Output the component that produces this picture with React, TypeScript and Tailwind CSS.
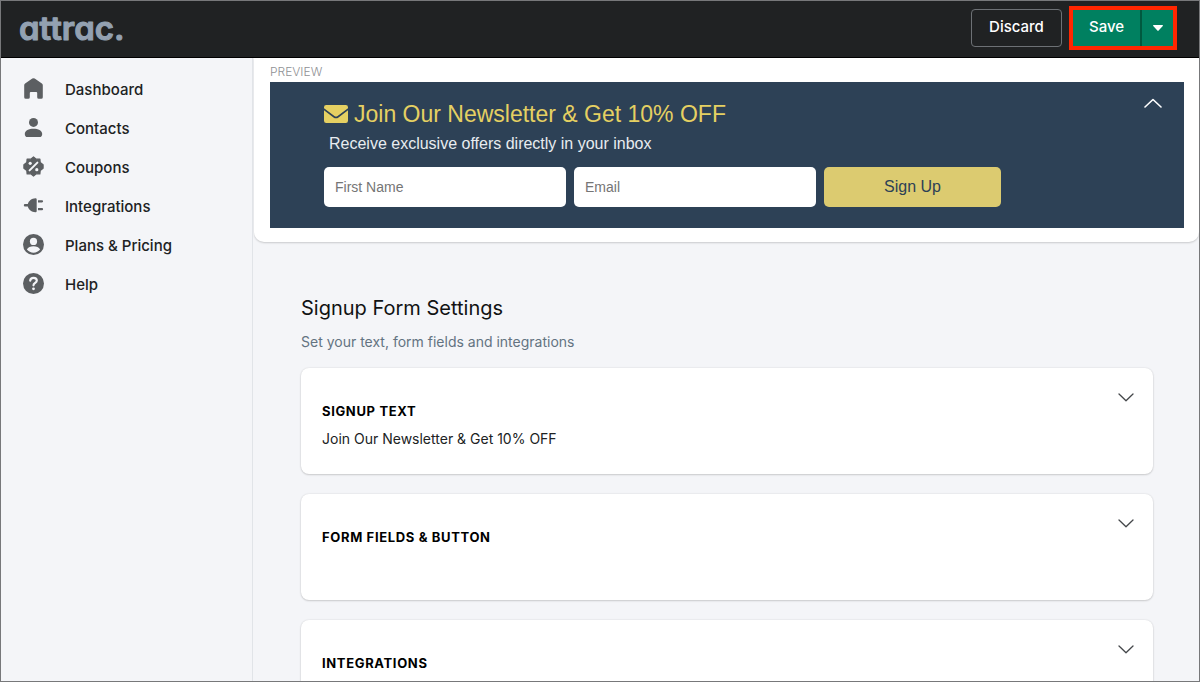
import React, { useState } from 'react';

const HomeIcon = () => (
  <svg viewBox="0 0 21 21" className="size-[21px]" fill="currentColor" aria-hidden="true">
    <path d="M9.3 .6a2 2 0 0 1 2.4 0l7.2 5a2.2 2.2 0 0 1 .9 1.8V19.2a1.6 1.6 0 0 1-1.6 1.6h-2.4a1.6 1.6 0 0 1-1.6-1.6v-4.200a1 1 0 0 0-1-1H7.800a1 1 0 0 0-1 1v4.200a1.6 1.6 0 0 1-1.6 1.6H2.800a1.6 1.6 0 0 1-1.6-1.6V7.400a2.2 2.2 0 0 1 .9-1.8z" />
  </svg>
);

const ContactsIcon = () => (
  <svg viewBox="0 0 21 21" className="size-[21px]" fill="currentColor" aria-hidden="true">
    <circle cx="10.5" cy="5.4" r="4.5" />
    <path d="M10.5 11.8c4.6 0 8.7 1.9 8.7 5.1 0 1.9-1 3.1-2.7 3.1h-12c-1.7 0-2.7-1.2-2.7-3.1 0-3.2 4.1-5.1 8.7-5.1z" />
  </svg>
);

const CouponsIcon = () => (
  <svg viewBox="0 0 21 21" className="size-[21px]" fill="currentColor" aria-hidden="true">
    <path
      d="M10.5 .9l2.7 2.3 3.7-.2.3 3.5 2.900 2.200v3.600l-2.900 2.200-.3 3.500-3.700-.2-2.700 2.300-2.700-2.300-3.700.2-.3-3.500L.9 12.300V8.700l2.900-2.200.3-3.500 3.700.2z"
      stroke="currentColor"
      strokeWidth="1.2"
      strokeLinejoin="round"
    />
    <path d="M6.600 14.400l7.800-7.800" stroke="#f4f5f8" strokeWidth="2" strokeLinecap="round" />
    <circle cx="7.2" cy="7.3" r="1.6" fill="#f4f5f8" />
    <circle cx="13.8" cy="13.7" r="1.6" fill="#f4f5f8" />
  </svg>
);

const PlugIcon = () => (
  <svg viewBox="0 0 21 21" className="size-[21px]" fill="currentColor" aria-hidden="true">
    <path d="M12.400 3.200a1.200 1.200 0 0 1 1.300 1.200v11.600a1.200 1.200 0 0 1-1.300 1.200c-3.800-.1-6.700-2.500-7.600-5.700H2a1.100 1.100 0 0 1 0-2.400h2.800c.9-3.300 3.800-5.700 7.600-5.900z" />
    <path d="M15 5.200h4a1 1 0 0 1 0 2.200h-4zM15 13.100h4a1 1 0 0 1 0 2.200h-4z" />
  </svg>
);

const AccountIcon = () => (
  <svg viewBox="0 0 21 21" className="size-[21px]" fill="currentColor" aria-hidden="true">
    <circle cx="10.5" cy="10.5" r="10.5" />
    <circle cx="10.5" cy="7.4" r="3.6" fill="#f4f5f8" />
    <path d="M10.5 12.3c3 0 5.4 1.2 6.600 3.100a8.300 8.300 0 0 1-13.200 0c1.200-1.900 3.600-3.100 6.600-3.100z" fill="#f4f5f8" />
  </svg>
);

const HelpIcon = () => (
  <svg viewBox="0 0 21 21" className="size-[21px]" fill="currentColor" aria-hidden="true">
    <circle cx="10.5" cy="10.5" r="10.5" />
    <path
      d="M7.200 7.600c.2-1.800 1.500-2.800 3.300-2.800 2 0 3.300 1.100 3.300 2.800 0 2.300-3.300 2.300-3.300 4.700"
      fill="none"
      stroke="#f4f5f8"
      strokeWidth="2.2"
      strokeLinecap="round"
    />
    <circle cx="10.5" cy="15.8" r="1.4" fill="#f4f5f8" />
  </svg>
);

const navItems = [
  { label: 'Dashboard', icon: HomeIcon },
  { label: 'Contacts', icon: ContactsIcon },
  { label: 'Coupons', icon: CouponsIcon },
  { label: 'Integrations', icon: PlugIcon },
  { label: 'Plans & Pricing', icon: AccountIcon },
  { label: 'Help', icon: HelpIcon }
];

const sections = [
  { title: 'Signup Text', text: 'Join Our Newsletter & Get 10% OFF' },
  { title: 'Form Fields & Button', text: '' },
  { title: 'Integrations', text: '' }
];

const App = () => {
  const [form, setForm] = useState({ firstName: '', email: '' });

  return (
    <div className="h-screen flex flex-col overflow-hidden border border-[#77787a] bg-[#f4f5f8] font-['Inter',sans-serif] text-[#202223]">
      {/* Top bar */}
      <header className="flex items-center justify-between border-b border-black bg-[#202223] h-[57px] shrink-0 pl-[18px] pr-[22px] pb-[3px]">
        <a href="#" aria-label="attrac.">
          <svg viewBox="0 0 120 50" className="w-[120px] h-[50px]">
            <text
              x="0"
              y="37"
              fill="#93a1b1"
              stroke="#93a1b1"
              strokeWidth="1"
              strokeLinejoin="round"
              className="text-[33px] font-semibold [font-feature-settings:'cv11']"
            >
              attrac.
            </text>
          </svg>
        </a>
        <div className="flex items-center gap-[7px] text-[15px] font-medium text-white">
          <button className="h-[38px] w-[91px] rounded border border-[#6d7175]">Discard</button>
          <div className="flex h-11 border-4 border-[#ff2600]">
            <button className="w-[67px] bg-[#008060]">Save</button>
            <button aria-label="More save options" className="flex items-center justify-center w-[33px] bg-[#008060] border-l-2 border-[#00593f]">
              <svg viewBox="0 0 10 6" className="w-[10px] h-[6px]" fill="#fff" aria-hidden="true">
                <path d="M.6 0h8.8c.5 0 .7.5.4.9L5.6 5.6a.8.8 0 0 1-1.2 0L.2.9C-.1.5.1 0 .6 0z" />
              </svg>
            </button>
          </div>
        </div>
      </header>

      <div className="flex flex-1 min-h-0">
        {/* Sidebar */}
        <nav className="w-[252px] shrink-0 border-r border-[#e1e4e8] pt-[13px]">
          <ul>
            {navItems.map(({ label, icon: Icon }) => (
              <li key={label}>
                <a href="#" className="flex items-center gap-[21px] h-[39px] pl-[22px] text-[15px] font-medium">
                  <span className="pb-[5px] text-[#5c5f62]">
                    <Icon />
                  </span>
                  {label}
                </a>
              </li>
            ))}
          </ul>
        </nav>

        <main className="flex-1 min-w-0 overflow-y-auto pl-px [scrollbar-width:none]">
          {/* Preview */}
          <section className="rounded-b-[10px] bg-white pl-4 pr-[15px] pt-[6px] pb-[14px] shadow-[0_1px_2px_rgba(0,0,0,0.18)]">
            <h2 className="pb-[2px] text-xs leading-4 font-light text-[#8f9194]">PREVIEW</h2>
            <div className="relative bg-[#2d4156] pl-[54px] pt-4 pb-[21px] font-['Liberation_Sans',sans-serif]">
              <h3 className="flex items-center gap-[6px] text-[23px] leading-8 text-[#e5d062]">
                <svg viewBox="0 0 24 18" className="w-6 h-[18px]" fill="currentColor" aria-hidden="true">
                  <path d="M2.200 0h19.600A2.200 2.200 0 0 1 24 2.200v1L13.600 11a2.600 2.600 0 0 1-3.200 0L0 3.200v-1A2.200 2.200 0 0 1 2.200 0z" />
                  <path d="M0 5.300l9.500 7.100a4.200 4.200 0 0 0 5 0L24 5.300v10.500a2.200 2.200 0 0 1-2.200 2.200H2.200A2.200 2.200 0 0 1 0 15.800z" />
                </svg>
                Join Our Newsletter &amp; Get 10% OFF
              </h3>
              <p className="pl-[5px] pt-[2px] text-base leading-6 text-[#e8ecf0]">
                Receive exclusive offers directly in your inbox
              </p>
              <form className="flex gap-2 pt-[11px]" onSubmit={(e) => e.preventDefault()}>
                <input
                  type="text"
                  aria-label="First Name"
                  placeholder="First Name"
                  value={form.firstName}
                  onChange={(e) => setForm(prev => ({ ...prev, firstName: e.target.value }))}
                  className="w-[242px] h-10 rounded-[5px] bg-white px-[11px] text-sm text-gray-800 placeholder:text-[#757575]"
                />
                <input
                  type="email"
                  aria-label="Email"
                  placeholder="Email"
                  value={form.email}
                  onChange={(e) => setForm(prev => ({ ...prev, email: e.target.value }))}
                  className="w-[242px] h-10 rounded-[5px] bg-white px-[11px] text-sm text-gray-800 placeholder:text-[#757575]"
                />
                <button type="submit" className="w-[177px] h-10 rounded-[5px] bg-[#dccb70] text-base text-[#2d4156]">
                  Sign Up
                </button>
              </form>
              <button aria-label="Collapse preview" className="absolute right-[22px] top-4">
                <svg viewBox="0 0 18 10" className="w-[18px] h-[10px]" fill="none" stroke="#fff" strokeWidth="1.6" strokeLinecap="round" strokeLinejoin="round">
                  <path d="M1 9l8-7.500L17 9" />
                </svg>
              </button>
            </div>
          </section>

          {/* Settings */}
          <section className="pl-[47px] pr-[46px] pt-[52px] pb-12">
            <h1 className="text-xl leading-7 text-[#111213]">Signup Form Settings</h1>
            <p className="pt-[10px] pb-4 text-sm leading-5 text-[#637381]">
              Set your text, form fields and integrations
            </p>
            <div className="flex flex-col gap-5">
              {sections.map(section => (
                <article
                  key={section.title}
                  className="flex items-start justify-between h-[106px] rounded-lg bg-white pl-[21px] pr-[19px] shadow-[0_0_2px_rgba(23,24,24,0.12),0_1px_2px_rgba(0,0,0,0.15)]"
                >
                  <div className="pt-[35px]">
                    <h2 className="text-[13px] leading-4 font-bold uppercase tracking-wider text-black">{section.title}</h2>
                    {section.text && <p className="pt-[10px] text-sm leading-5">{section.text}</p>}
                  </div>
                  <button aria-label={`Expand ${section.title}`} className="pt-[25px]">
                    <svg viewBox="0 0 16 9" className="w-4 h-[9px]" fill="none" stroke="#44474a" strokeWidth="1.3" strokeLinecap="round" strokeLinejoin="round">
                      <path d="M1 1l7 6.800L15 1" />
                    </svg>
                  </button>
                </article>
              ))}
            </div>
          </section>
        </main>
      </div>
    </div>
  );
};

export default App;
